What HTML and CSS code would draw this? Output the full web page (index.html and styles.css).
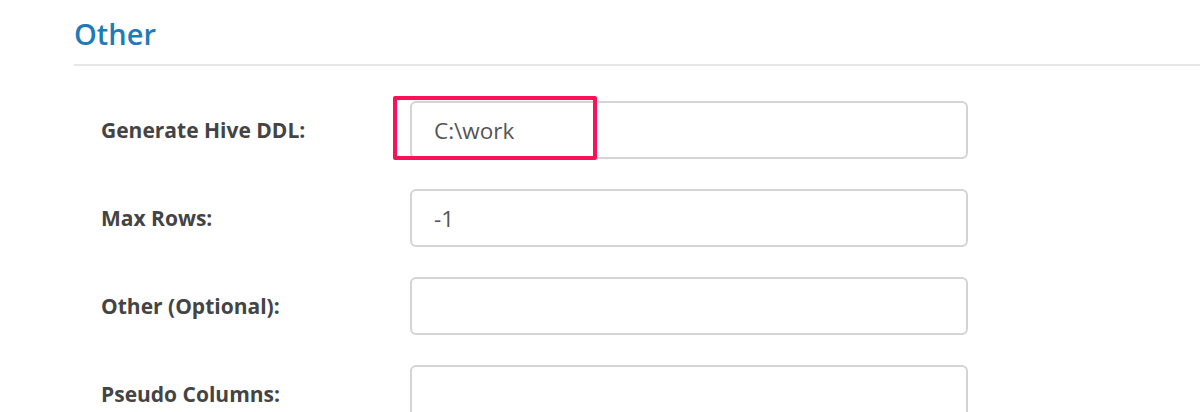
FILE: index.html
```
<!DOCTYPE html>
<html lang="en">
<head>
	<meta charset="UTF-8">
	<title>Other</title>
	<link rel="stylesheet" href="styles.css">
</head>
<body>
	<div class="section">
		<h2 class="title">Other</h2>
		<div class="rows">
			<div class="row">
				<label class="label">Generate Hive DDL:</label>
				<div class="field">
					<input class="input" type="text" value="C:\work">
					<span class="mark"></span>
				</div>
			</div>
			<div class="row">
				<label class="label">Max Rows:</label>
				<div class="field">
					<input class="input" type="text" value="-1">
				</div>
			</div>
			<div class="row">
				<label class="label">Other (Optional):</label>
				<div class="field">
					<input class="input" type="text" value="">
				</div>
			</div>
			<div class="row">
				<label class="label">Pseudo Columns:</label>
				<div class="field">
					<input class="input" type="text" value="">
				</div>
			</div>
		</div>
	</div>
</body>
</html>
```

FILE: styles.css
```
*{
	margin: 0;
	padding: 0;
	box-sizing: border-box;
}
body{
	background: #fff;
	font-family: "Open Sans", "Noto Sans", sans-serif;
	overflow: hidden;
}
.section{
	padding-left: 74px;
}
.title{
	font-size: 29px;
	font-weight: 600;
	color: #1f7ab8;
	line-height: 36px;
	padding: 16px 0 12px 0;
	border-bottom: 2px solid #e6e6e6;
}
.rows{
	padding: 35px 0 0 27px;
	display: flex;
	flex-direction: column;
	gap: 30px;
}
.row{
	display: flex;
	align-items: center;
	height: 58px;
}
.label{
	width: 309px;
	font-size: 21px;
	font-weight: 700;
	color: #444;
}
.field{
	position: relative;
}
.input{
	width: 558px;
	height: 58px;
	border: 2px solid #d4d4d4;
	border-radius: 6px;
	padding: 0 22px;
	font-family: "Open Sans", "Noto Sans", sans-serif;
	font-size: 22.5px;
	color: #555;
	outline: none;
}
.mark{
	position: absolute;
	left: -17px;
	top: -5px;
	width: 204px;
	height: 64px;
	border: 4px solid #fb1158;
	border-radius: 2px;
}
```
